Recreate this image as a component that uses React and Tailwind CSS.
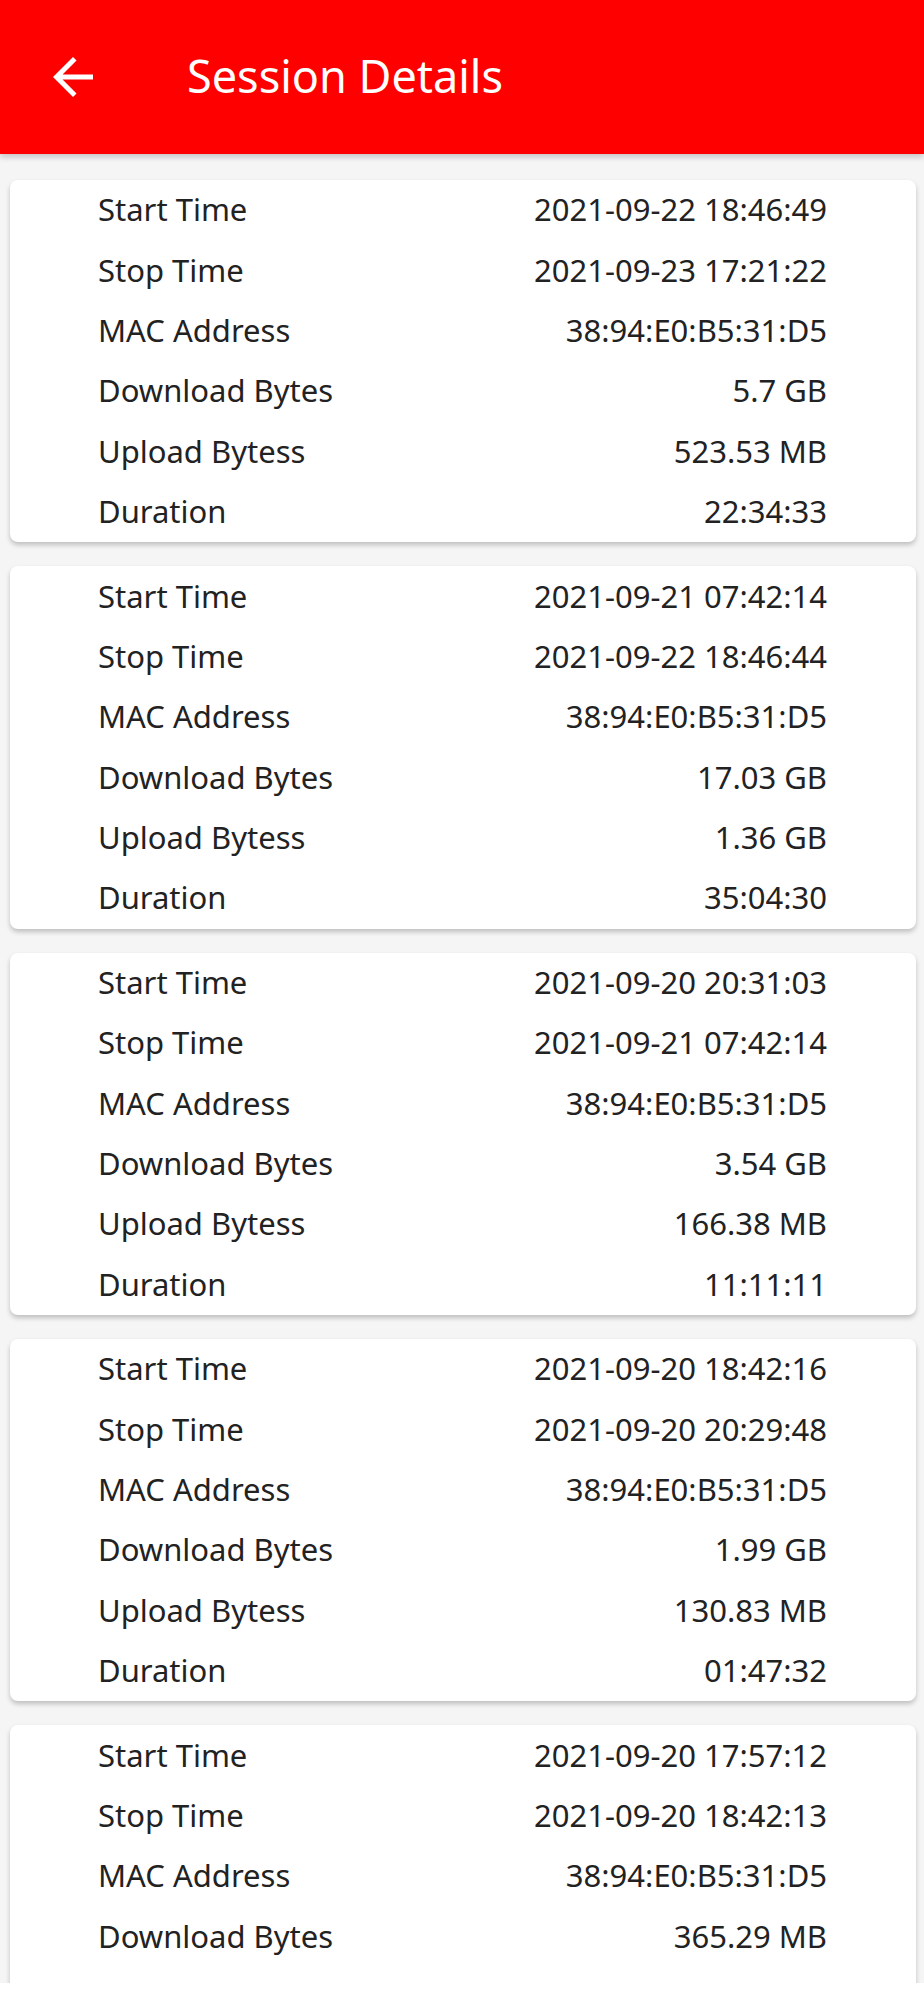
import React from 'react';

const sessions = [
    { start: '2021-09-22 18:46:49', stop: '2021-09-23 17:21:22', mac: '38:94:E0:B5:31:D5', download: '5.7 GB', upload: '523.53 MB', duration: '22:34:33' },
    { start: '2021-09-21 07:42:14', stop: '2021-09-22 18:46:44', mac: '38:94:E0:B5:31:D5', download: '17.03 GB', upload: '1.36 GB', duration: '35:04:30' },
    { start: '2021-09-20 20:31:03', stop: '2021-09-21 07:42:14', mac: '38:94:E0:B5:31:D5', download: '3.54 GB', upload: '166.38 MB', duration: '11:11:11' },
    { start: '2021-09-20 18:42:16', stop: '2021-09-20 20:29:48', mac: '38:94:E0:B5:31:D5', download: '1.99 GB', upload: '130.83 MB', duration: '01:47:32' },
    // only the first rows of the last card are on screen
    { start: '2021-09-20 17:57:12', stop: '2021-09-20 18:42:13', mac: '38:94:E0:B5:31:D5', download: '365.29 MB', partial: true },
];

const Row = ({ label, value }) => (
    <div className="flex h-[60.4px] items-center justify-between pb-[1px]">
        <span>{label}</span>
        <span>{value}</span>
    </div>
);

const SessionCard = ({ s }) => (
    <div className={`ml-[10px] mr-[8px] rounded-[8px] bg-white pl-[88px] pr-[89px] shadow-[0_3px_5px_rgba(0,0,0,0.22)] ${s.partial ? 'h-[362px]' : ''}`}>
        <Row label="Start Time" value={s.start} />
        <Row label="Stop Time" value={s.stop} />
        <Row label="MAC Address" value={s.mac} />
        <Row label="Download Bytes" value={s.download} />
        {!s.partial && (
            <>
                <Row label="Upload Bytess" value={s.upload} />
                <Row label="Duration" value={s.duration} />
            </>
        )}
    </div>
);

const App = () => {
    return (
        <div className="h-[2000px] bg-white">
            <div
                className="h-[1983px] overflow-hidden bg-[#f5f5f5] text-[31px] leading-none text-[#222222]"
                style={{ fontFamily: '"Noto Sans", Roboto, sans-serif' }}
            >
                {/* app bar */}
                <div className="relative z-10 flex h-[154px] items-center bg-[#ff0000] shadow-[0_3px_6px_rgba(0,0,0,0.2)]">
                    <button className="ml-[43px] flex h-[60px] w-[60px] items-center justify-center text-white focus:outline-none">
                        <svg width="60" height="60" viewBox="0 0 24 24" fill="currentColor">
                            <path d="M20 11H7.83l5.59-5.59L12 4l-8 8 8 8 1.41-1.41L7.83 13H20v-2z" />
                        </svg>
                    </button>
                    <span className="ml-[84px] mt-[-3px] text-[45px] text-white">Session Details</span>
                </div>

                <div className="flex flex-col gap-[24px] pt-[26px]">
                    {sessions.map((s, i) => (
                        <SessionCard key={i} s={s} />
                    ))}
                </div>
            </div>
        </div>
    );
};

export default App;
